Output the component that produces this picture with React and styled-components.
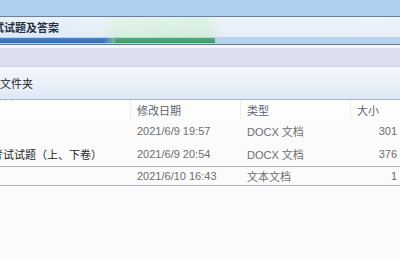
import styled, { createGlobalStyle } from "styled-components";

const GlobalStyle = createGlobalStyle`
  html, body {
    margin: 0;
    background: #fbfbfc;
    font-family: "Noto Sans CJK SC", "Liberation Sans", sans-serif;
    overflow: hidden;
  }
`;

const files = [
  { name: "", date: "2021/6/9 19:57", type: "DOCX 文档", size: "301", height: 23 },
  { name: "考试试题（上、下卷）", date: "2021/6/9 20:54", type: "DOCX 文档", size: "376", height: 24 },
  { name: "", date: "2021/6/10 16:43", type: "文本文档", size: "1", height: 20, selected: true },
];

export default function App() {
  return (
    <Window>
      <GlobalStyle />
      <TopBand />
      <TaskArea>
        <TitleRow>
          <TitleText>考试试题及答案</TitleText>
        </TitleRow>
        <BarRow>
          <Bar $width={105} $color="#2f6db5" />
          <Gap />
          <Bar $width={100} $color="#3d9a6a" />
        </BarRow>
      </TaskArea>
      <Lavender />
      <FolderBar>文件夹</FolderBar>
      <Header>
        <NameCol>
          <SortArrow width="7" height="4" viewBox="0 0 7 4">
            <path d="M0.5 3.5 L3.5 0.5 L6.5 3.5" fill="none" stroke="#6a7380" strokeWidth="1" />
          </SortArrow>
        </NameCol>
        <HeadCell $w={110}>修改日期</HeadCell>
        <HeadCell $w={110}>类型</HeadCell>
        <HeadCell $w={50}>大小</HeadCell>
      </Header>
      {files.map((f, i) => (
        <Row key={i} $h={f.height} $selected={f.selected}>
          <NameCol>
            <Name>{f.name}</Name>
          </NameCol>
          <Cell $w={110}>{f.date}</Cell>
          <Cell $w={110}>{f.type}</Cell>
          <SizeCell>{f.size}</SizeCell>
        </Row>
      ))}
    </Window>
  );
}

const Window = styled.div`
  width: 400px;
  height: 260px;
  display: flex;
  flex-direction: column;
  background: #fbfbfc;
`;

const TopBand = styled.div`
  height: 16px;
  background: #afcff1;
  border-bottom: 1px solid #6c8096;
`;

const TaskArea = styled.div`
  display: flex;
  flex-direction: column;
  background: linear-gradient(
    to right,
    #dce9f7 0px,
    #e2edf8 100px,
    #d6efdf 115px,
    #d2ecdc 205px,
    #e4edf7 222px,
    #e6eef8 100%
  );
  border-bottom: 1px solid #677b92;
`;

const TitleRow = styled.div`
  height: 20px;
  display: flex;
  align-items: center;
  overflow: hidden;
  background: linear-gradient(to bottom, rgba(255, 255, 255, 0.35), rgba(255, 255, 255, 0));
`;

const TitleText = styled.span`
  margin-left: -18px;
  font-size: 11px;
  font-weight: bold;
  color: #26313f;
  white-space: nowrap;
`;

const BarRow = styled.div`
  height: 7px;
  display: flex;
  align-items: center;
  background: #b9d3ee;
`;

const Bar = styled.div`
  width: ${(p) => p.$width}px;
  height: 5px;
  background: linear-gradient(to bottom, ${(p) => p.$color}cc, ${(p) => p.$color});
`;

const Gap = styled.div`
  width: 10px;
  height: 5px;
  background: linear-gradient(to right, #4a82c2, #7fb89a);
`;

const Lavender = styled.div`
  height: 18px;
  border-top: 3px solid #f4f5fb;
  background: #dcdef0;
  border-bottom: 1px solid #cdd3e6;
`;

const FolderBar = styled.div`
  height: 32px;
  display: flex;
  align-items: center;
  font-size: 11px;
  color: #1e2530;
  background: linear-gradient(to bottom, #f4f7fc, #e9f0f9 60%, #dde8f5);
  border-bottom: 1px solid #a6bad3;
`;

const Header = styled.div`
  height: 19px;
  display: flex;
  align-items: center;
  background: #fdfdfe;
`;

const NameCol = styled.div`
  width: 130px;
  height: 100%;
  display: flex;
  align-items: center;
  overflow: hidden;
  position: relative;
`;

const SortArrow = styled.svg`
  position: absolute;
  left: 5px;
  top: -3px;
`;

const HeadCell = styled.div`
  width: ${(p) => p.$w}px;
  height: 100%;
  box-sizing: border-box;
  display: flex;
  align-items: center;
  padding-left: 6px;
  border-left: 1px solid #eaeef2;
  font-size: 11px;
  color: #5c6470;
`;

const Row = styled.div`
  height: ${(p) => p.$h}px;
  display: flex;
  align-items: center;
  box-sizing: border-box;
  border-top: ${(p) => (p.$selected ? "1px solid #adb4bc" : "none")};
  border-bottom: ${(p) => (p.$selected ? "1px solid #adb4bc" : "none")};
`;

const Name = styled.span`
  margin-left: -8px;
  font-size: 11px;
  color: #1b1b1b;
  white-space: nowrap;
`;

const Cell = styled.div`
  width: ${(p) => p.$w}px;
  padding-left: 7px;
  box-sizing: border-box;
  font-family: "Liberation Sans", "Noto Sans CJK SC", sans-serif;
  font-size: 11px;
  color: #6d6d6d;
  white-space: nowrap;
`;

const SizeCell = styled(Cell)`
  width: 50px;
  padding-left: 0;
  padding-right: 3px;
  text-align: right;
`;
